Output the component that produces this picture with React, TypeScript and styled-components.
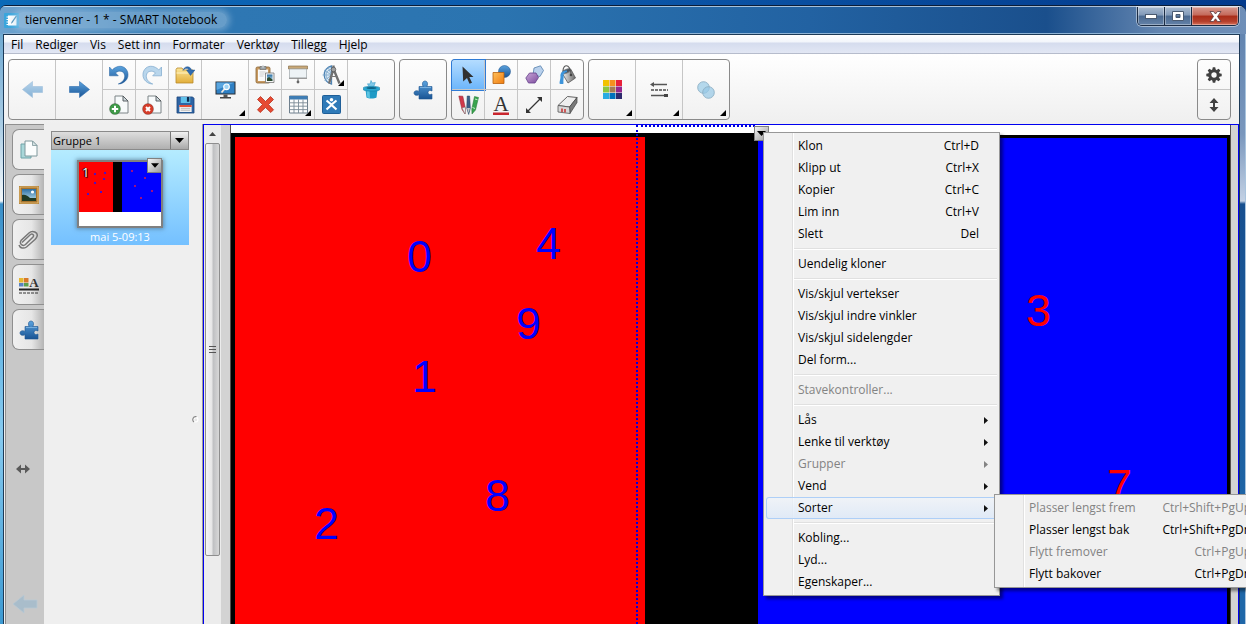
import React from "react";
import styled, { createGlobalStyle, css } from "styled-components";

const GlobalStyle = createGlobalStyle`
  *, *::before, *::after { box-sizing: border-box; }
  html, body { margin: 0; height: 100%; overflow: hidden; }
  body {
    font-family: "Open Sans", "Noto Sans", sans-serif;
    font-size: 12px;
    line-height: 16px;
    color: #000;
  }
  button, select { font: inherit; color: inherit; margin: 0; padding: 0; border: 0; background: none; }
  svg { display: block; flex: none; }
`;

/* ---------- window frame ---------- */

const Desktop = styled.div`
  height: 100vh;
  padding-top: 5px;
  overflow: hidden;
  background: linear-gradient(90deg, #0a6ab8 0%, #0d5cae 40%, #033a8c 100%);
`;

const Window = styled.div`
  height: 100%;
  display: flex;
  flex-direction: column;
  border-top: 1px solid #0b1d38;
  border-radius: 6px 7px 0 0;
  overflow: hidden;
  background: linear-gradient(90deg, #6ea3cf 0%, #2f78b4 12%, #2b74b0 40%, #2262a2 65%, #1a4f8c 84%, #6385b0 93%, #6f8fb8 100%);
`;

const TitleBar = styled.header`
  display: flex;
  align-items: flex-start;
  height: 28px;
  flex: none;
  padding: 0 7px 0 4px;
  border-top: 1px solid rgba(255, 255, 255, 0.6);
`;

const Title = styled.h1`
  display: flex;
  align-items: center;
  gap: 6px;
  flex: 1;
  height: 26px;
  margin: 0;
  font-size: 12px;
  font-weight: 400;
`;

const TitleText = styled.span`
  padding: 0 10px;
  margin-left: -10px;
  border-radius: 10px;
  background: rgba(190, 216, 236, 0.4);
  box-shadow: 0 0 6px 3px rgba(190, 216, 236, 0.4);
`;

const Controls = styled.div`
  display: flex;
  height: 19px;
  border: 1px solid #1b2c44;
  border-top: 0;
  border-radius: 0 0 5px 5px;
  overflow: hidden;
  box-shadow: 0 0 0 1px rgba(255, 255, 255, 0.45);
`;

const ControlButton = styled.button<{ $close?: boolean }>`
  display: grid;
  place-items: center;
  width: ${(p) => (p.$close ? 46 : 27)}px;
  border-right: ${(p) => (p.$close ? 0 : 1)}px solid #1b2c44;
  box-shadow: inset 0 0 0 1px rgba(255, 255, 255, 0.35);
  background: ${(p) =>
    p.$close
      ? "linear-gradient(#d79a90 0%, #c4695a 45%, #a92c18 50%, #b5402c 80%, #d8715a 100%)"
      : "linear-gradient(#a9bbd0 0%, #8199b8 45%, #4a6990 50%, #6482a8 100%)"};
`;

const Body = styled.div`
  flex: 1;
  min-height: 0;
  display: grid;
  grid-template-columns: 3px minmax(0, 1fr) 6px;
`;

const Glass = styled.div<{ $side: "left" | "right" }>`
  background: ${(p) =>
    p.$side === "left"
      ? "linear-gradient(#6fa9d2 0, #a9cce4 90px, #f2f7fa 167px, #3a8fc8 170px, #5fb2e2 280px, #86caef 400px, #3d9ad2 590px)"
      : "linear-gradient(#6385b0 0, #7a97bd 100px, #c3d1e4 167px, #174f8f 170px, #1f67a8 500px)"};
  border-right: ${(p) => (p.$side === "right" ? "1px solid #a9c4de" : "0")};
`;

const Client = styled.div`
  display: flex;
  flex-direction: column;
  min-height: 0;
  border: 1px solid #1d3a57;
  border-bottom: 0;
  box-shadow: 0 -1px 0 #8fb4d6;
  background: #efefef;
`;

/* ---------- menu bar ---------- */

const MenuBar = styled.nav`
  display: flex;
  flex: none;
  height: 19px;
  padding: 2px 0 0 1px;
  border-bottom: 1px solid #b6bccc;
  background: linear-gradient(#fff 0, #f2f5fb 7px, #d5dcee 8px, #e2e7f4 18px);
`;

const MenuBarButton = styled.button`
  padding: 0 6px;
`;

/* ---------- toolbar ---------- */

const Toolbar = styled.div`
  display: flex;
  gap: 4px;
  flex: none;
  height: 70px;
  padding: 5px 8px 4px 4px;
  background: linear-gradient(#fff, #efefef);
`;

const Group = styled.div`
  display: flex;
  border: 1px solid #8a8a8a;
  border-radius: 4px;
  background: linear-gradient(#fdfdfd, #f1f1f1);
`;

const Spacer = styled.div`
  flex: 1;
`;

const Pairs = styled.div<{ $last?: boolean }>`
  display: grid;
  grid-auto-flow: column;
  grid-template-rows: 30px 29px;
  ${(p) =>
    p.$last &&
    css`
      > :nth-last-child(-n + 2) { width: 32px; border-right: 0; }
    `}
`;

const ToolButton = styled.button<{ $wide?: boolean; $last?: boolean; $active?: boolean }>`
  position: relative;
  display: grid;
  place-items: center;
  width: ${(p) => (p.$wide ? 47 : 33)}px;
  border-right: 1px solid #c6c6c6;
  ${(p) => p.$wide && p.$last && css`width: 46px; border-right: 0;`}
  ${Pairs} > &:nth-child(odd) { border-bottom: 1px solid #c6c6c6; }
  ${(p) =>
    p.$active &&
    css`
      background: linear-gradient(#b4dcff, #6db6fb);
      box-shadow: 0 0 0 1px #2f7bd6;
      border-radius: 3px 0 0 0;
    `}
`;

const SettingsPairs = styled(Pairs)`
  > button { width: 32px; border-right: 0; }
`;

const Corner = styled.svg`
  position: absolute;
  right: 3px;
  bottom: 3px;
`;

/* ---------- side rail and page sorter ---------- */

const Main = styled.main`
  flex: 1;
  min-height: 0;
  display: flex;
`;

const Rail = styled.aside`
  display: flex;
  flex-direction: column;
  flex: none;
  width: 40px;
  padding: 4px 0 0 6px;
  border: solid #8f8f8f;
  border-width: 1px 1px 0 1px;
  margin-left: 1px;
  margin-right: -1px;
  background: #c8c8c8;
`;

const RailTabs = styled.div`
  display: flex;
  flex-direction: column;
  gap: 4px;
`;

const RailTab = styled.button<{ $active?: boolean }>`
  display: grid;
  place-items: center;
  height: 41px;
  border: 1px solid #8f8f8f;
  border-right: 0;
  border-radius: 7px 0 0 7px;
  background: ${(p) => (p.$active ? "#efefef" : "linear-gradient(90deg, #f0f0f0 0%, #e6e6e6 60%, #b4b4b4 100%)")};
  ${(p) => p.$active && css`margin-right: -1px; padding-right: 1px;`}
`;

const RailFoot = styled.div`
  flex: 1;
  display: flex;
  flex-direction: column;
  justify-content: space-between;
  align-items: flex-start;
  padding: 112px 0 10px 0;
`;

const RailButton = styled.button<{ $indent?: boolean }>`
  display: block;
  margin-left: ${(p) => (p.$indent ? 4 : 0)}px;
`;

const Sorter = styled.section`
  display: flex;
  flex: none;
  width: 159px;
  border-right: 1px solid #9a9a9a;
  background: #efefef;
`;

const SorterPages = styled.div`
  flex: none;
  width: 145px;
  padding: 7px 0 0 7px;
`;

const GroupPicker = styled.div`
  display: grid;
  grid-template-columns: minmax(0, 1fr) 18px;
  height: 19px;
  border: 1px solid #8a8a8a;
  background: linear-gradient(#dedede, #b0b0b0);
  font-size: 11px;

  > select {
    grid-area: 1 / 1 / 2 / 3;
    appearance: none;
    padding-left: 1px;
    line-height: 17px;
  }
`;

const PickerArrow = styled.span`
  grid-area: 1 / 2;
  display: grid;
  place-items: center;
  pointer-events: none;
  border: 1px solid #777;
  border-width: 0 0 0 1px;
  background: linear-gradient(#f2f2f2, #a8a8a8);
`;

const PageCard = styled.div`
  display: flex;
  flex-direction: column;
  align-items: center;
  gap: 1px;
  padding-top: 10px;
  height: 95px;
  background: linear-gradient(#b5ecff, #74c0ff);
  color: #fff;
  font-size: 11px;
`;

const Thumb = styled.div`
  position: relative;
  display: flex;
  width: 86px;
  height: 68px;
  padding-bottom: 14px;
  border: 2px solid #808080;
  background: #fff;
  box-shadow: 0 0 4px 1px rgba(70, 100, 120, 0.6);
`;

const ThumbZone = styled.div<{ $color: string; $grow: number }>`
  flex: ${(p) => p.$grow};
  background: ${(p) => p.$color};
`;

const ThumbOverlay = styled.svg`
  position: absolute;
  inset: 0;
`;

const ThumbNumber = styled.span`
  position: absolute;
  left: 3px;
  top: 1px;
  font: 400 13px/18px "Open Sans", sans-serif;
  text-shadow: 0 0 1px #000, 1px 1px 1px #000, -1px 0 1px #000;
`;

const ArrowButton = styled.button`
  display: grid;
  place-items: center;
  position: absolute;
  width: 15px;
  height: 15px;
  border: 1px solid #808080;
  background: linear-gradient(135deg, #f4f4f4, #9c9c9c);
`;

const ThumbMenu = styled(ArrowButton)`
  right: -1px;
  top: -4px;
`;

const Splitter = styled.div`
  flex: 1;
  display: grid;
  place-items: center end;
  padding: 90px 3px 0 0;
`;

/* ---------- workspace ---------- */

const Workspace = styled.section`
  flex: 1;
  min-width: 0;
  display: flex;
  border: 1px solid #0000f0;
  border-bottom: 0;
  background: #d3d3d3;
`;

const ScrollTrack = styled.div`
  display: flex;
  flex-direction: column;
  flex: none;
  width: 17px;
  padding: 0 1px;
  background: #ececec;
`;

const ScrollUp = styled.button`
  display: grid;
  place-items: center;
  height: 18px;
`;

const ScrollThumb = styled.div`
  display: grid;
  place-items: center;
  flex: 6;
  border: 1px solid #8e8e8e;
  border-radius: 2px;
  background: linear-gradient(90deg, #f6f6f6 0%, #e6e6e6 45%, #bfc0c2 55%, #d8d8d8 100%);
`;

const ScrollRest = styled.div`
  flex: 1;
`;

const Board = styled.div`
  position: relative;
  flex: 1;
  display: flex;
  padding-top: 8px;
  margin: 0 7px 0 9px;
  border: solid #55504f;
  border-width: 0 1px;
  background: #fff;
`;

const RedZone = styled.div`
  flex: none;
  width: 414px;
  border: solid #000;
  border-width: 4px 0 0 4px;
  background: #f00;
`;

const BlackZone = styled.div`
  flex: none;
  width: 113px;
  background: #000;
`;

const BlueZone = styled.div`
  flex: 1;
  margin-top: 2px;
  border: solid #000;
  border-width: 3px 3px 0 0;
  background: #00f;
`;

const Digit = styled.span<{ $x: number; $y: number; $color: string }>`
  position: absolute;
  left: ${(p) => p.$x}px;
  top: ${(p) => p.$y}px;
  font: 45px/45px "Liberation Sans", Arial, sans-serif;
  color: ${(p) => p.$color};
`;

const Selection = styled.div`
  position: absolute;
  left: 405px;
  top: 0;
  bottom: 0;
  width: 119px;
  border: dotted #0000e0;
  border-width: 2px 0 0 2px;
`;

const SelectionMenu = styled(ArrowButton)`
  left: 523px;
  top: 1px;
`;

/* ---------- context menus ---------- */

const MenuBox = styled.div`
  position: absolute;
  z-index: 2;
  padding: 2px;
  border: 1px solid #979797;
  background: linear-gradient(90deg, #f0f0f0 28px, #e0e0e0 28px, #e0e0e0 29px, #fff 29px, #fff 30px, #f0f0f0 30px);
  box-shadow: 3px 3px 3px rgba(0, 0, 0, 0.45);
`;

const ContextMenu = styled(MenuBox)`
  left: 532px;
  top: 7px;
  width: 237px;
`;

const SubMenu = styled(MenuBox)`
  left: 228px;
  top: -3px;
  width: 278px;
`;

const MenuRow = styled.div`
  position: relative;
`;

const MenuItem = styled.button<{ $open?: boolean }>`
  display: flex;
  align-items: center;
  justify-content: space-between;
  width: 100%;
  height: 22px;
  padding: 0 18px 0 32px;
  white-space: nowrap;
  text-align: left;
  &:disabled { color: #838383; }
  ${(p) =>
    p.$open &&
    css`
      border-radius: 3px;
      box-shadow: inset 0 0 0 1px #aecff7;
      background: linear-gradient(rgba(240, 244, 250, 0.7), rgba(222, 233, 247, 0.9));
    `}
`;

const MenuArrow = styled.svg`
  margin-right: -9px;
`;

const Separator = styled.hr`
  height: 2px;
  margin: 3px 0 3px 28px;
  border: 0;
  border-top: 1px solid #e0e0e0;
  background: #fff;
`;

/* ---------- icons ---------- */

const HiddenDefs = styled.svg`
  position: absolute;
`;

const Down = ({ w = 9 }: { w?: number }) => (
  <svg width={w} height="5" viewBox="0 0 9 5"><path d="M0 0h9L4.500 5z" fill="#000" /></svg>
);

const CornerMark = () => (
  <Corner width="6" height="6" viewBox="0 0 6 6"><path d="M6 0v6H0z" fill="#000" /></Corner>
);

const Defs = () => (
  <HiddenDefs width="0" height="0" aria-hidden="true">
    <defs>
      <linearGradient id="blue" x1="0" y1="0" x2="0" y2="1"><stop offset="0" stopColor="#5aa2de" /><stop offset="1" stopColor="#1a5494" /></linearGradient>
      <linearGradient id="pale" x1="0" y1="0" x2="0" y2="1"><stop offset="0" stopColor="#b4d2ea" /><stop offset="1" stopColor="#86b2d6" /></linearGradient>
      <linearGradient id="folder" x1="0" y1="0" x2="0" y2="1"><stop offset="0" stopColor="#fbe69a" /><stop offset="1" stopColor="#e2ae3a" /></linearGradient>
      <linearGradient id="orange" x1="0" y1="0" x2="1" y2="1"><stop offset="0" stopColor="#ffc05a" /><stop offset="1" stopColor="#f07c10" /></linearGradient>
      <linearGradient id="violet" x1="0" y1="0" x2="1" y2="1"><stop offset="0" stopColor="#c9a6d8" /><stop offset="1" stopColor="#7d4d9e" /></linearGradient>
      <linearGradient id="metal" x1="0" y1="0" x2="1" y2="0"><stop offset="0" stopColor="#f4f4f4" /><stop offset="1" stopColor="#6a6a6a" /></linearGradient>
      <linearGradient id="sky" x1="0" y1="0" x2="0" y2="1"><stop offset="0" stopColor="#2b6ea2" /><stop offset="1" stopColor="#bfe3f0" /></linearGradient>
    </defs>
  </HiddenDefs>
);

const AppIcon = () => (
  <svg width="15" height="15" viewBox="0 0 15 15">
    <rect width="15" height="15" rx="1" fill="#3aa5dc" />
    <path d="M4 2.500h8.500v10H4z" fill="#fff" />
    <path d="M2.500 4h3M2.500 6.500h3M2.500 9h3M2.500 11.500h3" stroke="#fff" strokeWidth="1.200" />
    <path d="M12 2.500 7.500 9 7 10.800l1.500-1L13 3.300z" fill="#3d86b0" />
  </svg>
);

const Arrow = ({ pale, left }: { pale?: boolean; left?: boolean }) => (
  <svg width="21" height="17" viewBox="0 0 21 17">
    <path
      d={left ? "M.5 8.500 10.500.5v5h10v6h-10v5z" : "M20.500 8.500 10.500.5v5H.5v6h10v5z"}
      fill={pale ? "url(#pale)" : "url(#blue)"}
      stroke={pale ? "#9fc0dc" : "#2c6cae"}
      strokeWidth=".6"
    />
  </svg>
);

const turn =
  "M.5 2 3.200 5C7 .8 12.500 .2 16 3c4 3.500 4 10 .2 13.200C14 18.300 11.500 19 9.300 19c4.200-1.800 6.900-4.700 6.300-8.800C15 6 10 4.800 6.500 7.900L9.300 10.800H.5z";
const Undo = () => (
  <svg width="20" height="20" viewBox="0 0 20 20"><path d={turn} fill="url(#blue)" stroke="#1f5c9c" strokeWidth=".5" /></svg>
);
const Redo = () => (
  <svg width="20" height="20" viewBox="0 0 20 20"><path d={turn} transform="translate(20 0) scale(-1 1)" fill="#b9d6ec" stroke="#86aed0" strokeWidth=".8" /></svg>
);

const Folder = () => (
  <svg width="20" height="20" viewBox="0 0 20 20">
    <path d="M1 4.500 2 3h5l1.500 2H18v13H1z" fill="url(#folder)" stroke="#b98a2c" strokeWidth=".8" />
    <path d="M1.500 8h16" stroke="#fff3c4" />
    <path d="M8 5.500C9 1 15 0 16.500 5H20l-4.500 5.500L11.500 5h2.300C13 3 10 3 8 5.500z" fill="#2f6cb0" stroke="#1c4c86" strokeWidth=".4" />
  </svg>
);

const PageMark = ({ color, children }: { color: string; children: React.ReactNode }) => (
  <svg width="20" height="20" viewBox="0 0 20 20">
    <path d="M6 1h8l5 5v12H6z" fill="#f7fafb" stroke="#7d8487" />
    <path d="M14 1v5h5z" fill="#cfd9dd" stroke="#4d5457" strokeWidth=".9" />
    <circle cx="6" cy="14" r="5.500" fill={color} stroke="rgba(0,0,0,.35)" strokeWidth=".6" />
    {children}
  </svg>
);
const AddPage = () => <PageMark color="#3f9a48"><path d="M6 10.800v6.400M2.800 14h6.400" stroke="#fff" strokeWidth="2" /></PageMark>;
const DeletePage = () => <PageMark color="#d63d2a"><path d="m4 12 4 4m0-4-4 4" stroke="#fff" strokeWidth="2" /></PageMark>;

const Save = () => (
  <svg width="19" height="18" viewBox="0 0 20 19">
    <path d="M1 1h16.500L19 2.500V18H1z" fill="#2d64a4" stroke="#1c4478" strokeWidth=".8" />
    <path d="M5 1h10v6.500H5z" fill="#5fc0ea" /><path d="M11.500 1H14v5h-2.500z" fill="#0d2c50" />
    <path d="M3.500 9.500h13V17h-13z" fill="#f3f3f3" /><path d="M3.500 9.500h13v2h-13z" fill="#e05038" />
    <path d="M5 13h10M5 15h10" stroke="#a8a8a8" strokeWidth=".8" />
  </svg>
);

const Monitor = () => (
  <svg width="21" height="18" viewBox="0 0 21 18">
    <path d="M.5.500h20v13H.5z" fill="#2a2f35" /><path d="M1.500 1.500h18v11h-18z" fill="#2f80c4" />
    <path d="M1.500 1.500h18L1.500 9z" fill="#5aa6e0" />
    <path d="M8.500 13.500h4v2.500h-4z" fill="#555" /><path d="M5 16h11v1.500H5z" fill="#444" />
    <path d="m9.500 8-3 3.500" stroke="#f1e8e0" strokeWidth="1.800" /><circle cx="11.500" cy="5.800" r="2.800" fill="#9fd4f5" stroke="#fff" strokeWidth="1.200" />
  </svg>
);

const Paste = () => (
  <svg width="20" height="19" viewBox="0 0 20 19">
    <rect x="1" y="2" width="14" height="16" rx="1.500" fill="#c79a62" stroke="#8b6434" strokeWidth=".8" />
    <path d="M3 4.500h10V16H3z" fill="#fafafa" /><path d="M5 1.500h6V4.500H5z" fill="#9ba3a8" stroke="#666" strokeWidth=".6" /><circle cx="8" cy="1.700" r="1.300" fill="#b7bec2" />
    <path d="M4.500 7h6M4.500 9h5M4.500 11h4" stroke="#d0d0d0" />
    <path d="M10.500 8h8.500v9.500h-8.500z" fill="#f6f6f6" stroke="#777" strokeWidth=".8" /><path d="M12 9.500h5.500V16H12z" fill="url(#sky)" /><path d="m12 16 0-2.500 2-1.500 3.500 2.500V16z" fill="#2d4a30" />
  </svg>
);

const Screen = () => (
  <svg width="20" height="19" viewBox="0 0 20 19">
    <path d="M.5 1h19v3H.5z" fill="#c8a878" stroke="#8b7350" strokeWidth=".7" />
    <path d="M1.500 4h17v9h-17z" fill="#eef3f6" stroke="#aab0b4" strokeWidth=".8" /><path d="M1 13.300h18" stroke="#8a8a8a" />
    <path d="M10 13.500V17" stroke="#777" /><circle cx="10" cy="17" r="1.400" fill="#666" />
  </svg>
);

const Compass = () => (
  <svg width="21" height="20" viewBox="0 0 21 20">
    <path d="M10.500 1A9.200 9.200 0 0 0 10.500 19z" fill="#dceaf5" stroke="#4f84b4" strokeWidth="1.300" />
    <path d="M10.500 4.500a5.500 5.500 0 0 0 0 11M10.500 10 3 5M10.500 10H1.500M10.500 10 3.500 15.500M10.500 10 7 2" fill="none" stroke="#7aa4c8" strokeWidth=".8" />
    <path d="M12.500.500v3M8 18.500 12.500 4 18.500 18.500" fill="none" stroke="#707070" strokeWidth="2.400" />
    <circle cx="12.500" cy="4.500" r="2.300" fill="#a0a0a0" stroke="#555" strokeWidth=".7" /><path d="M10 11.500h5.500" stroke="#777" />
  </svg>
);

const Delete = () => (
  <svg width="19" height="19" viewBox="0 0 19 19">
    <path d="M1.500 4.500 4.500 1.500 9.500 6.500 14.500 1.500 17.500 4.500 12.500 9.500 17.500 14.800 14.800 17.500 9.500 12.500 4.200 17.500 1.500 14.800 6.500 9.500z" fill="#e64b33" stroke="#b9301c" strokeWidth=".8" />
  </svg>
);

const TableIcon = () => (
  <svg width="19" height="19" viewBox="0 0 19 19">
    <path d="M.5 1h18v17H.5z" fill="#fdfdfd" stroke="#6f7f8c" /><path d="M.5 1h18v3.500H.5z" fill="#3f7db4" />
    <path d="M.5 7.800h18M.5 11.200h18M.5 14.600h18M5 4.500V18M9.500 4.500V18M14 4.500V18" stroke="#7c8b96" strokeWidth=".9" />
  </svg>
);

const Exchange = () => (
  <svg width="19" height="19" viewBox="0 0 19 19">
    <rect x=".5" y=".5" width="18" height="18" rx="1" fill="#2f7ab8" stroke="#1f5f98" />
    <path d="M4.500 5.500 9.500 9.500l5-4M4.500 14.500l5-4.500 5 4.500" fill="none" stroke="#fff" strokeWidth="2.200" />
    <circle cx="9.500" cy="4.800" r="1.800" fill="#fff" />
  </svg>
);

const MagicHat = () => (
  <svg width="17" height="19" viewBox="0 0 17 19">
    <path d="M8 .5 9.300 3l3-.5-1.500 4h-5L4.500 3.800 7 4z" fill="#7ec8e8" stroke="#3a9cc8" strokeWidth=".6" />
    <path d="M2.500 9.500h12l-1 8c-2 1.300-8 1.300-10 0z" fill="#1e9ac6" /><path d="M3.500 10.500h3l.5 7.500-2.700-.5z" fill="#5cc4e2" />
    <path d="M.5 7.500C2 6 15 6 16.500 7.500V10c-2 1.500-14 1.500-16 0z" fill="#2aa6d0" stroke="#1480a8" strokeWidth=".6" /><ellipse cx="8.500" cy="8" rx="5" ry="1.100" fill="#0d6488" />
  </svg>
);

const Puzzle = () => (
  <svg width="20" height="20" viewBox="0 0 20 20">
    <path
      d="M6 6.500h4.200C9 5 9 1 12 1s3 4 1.800 5.500H19V11c-1.500-1-4-.7-4 1.500s2.500 2.500 4 1.500v5H6v-4.500C4.500 16 1 15.500 1 13s3.500-3 5-1.500z"
      fill="url(#blue)" stroke="#1f5590" strokeWidth=".6"
    />
    <path d="M7 7.500h11" stroke="#8cc0ea" strokeWidth=".7" />
  </svg>
);

const Pointer = () => (
  <svg width="12" height="18" viewBox="0 0 12 18"><path d="M.5.500 11.500 11H7.300l2.700 5.700-2.500 1L5 12l-3.800 3.500z" fill="#303030" /></svg>
);

const Shapes = () => (
  <svg width="19" height="19" viewBox="0 0 19 19">
    <circle cx="12.500" cy="6.500" r="6" fill="url(#blue)" stroke="#2a6098" strokeWidth=".6" />
    <path d="M1 7.500h11v11H1z" fill="url(#orange)" stroke="#b8600c" strokeWidth=".8" />
  </svg>
);

const Polygons = () => (
  <svg width="19" height="19" viewBox="0 0 19 19">
    <path d="M9 3 15.500 .8 18.500 5.500 15 11.500 8 10z" fill="#b8d0ec" stroke="#5580ac" strokeWidth=".8" />
    <path d="M4.500 8h6.500l2.500 4.500-3.500 5.500H3.500L.8 13z" fill="url(#violet)" stroke="#64408a" strokeWidth=".8" />
  </svg>
);

const Bucket = () => (
  <svg width="17" height="20" viewBox="0 0 17 20">
    <path d="M3 8 12 4.500l4.500 8.500-7.500 5z" fill="url(#metal)" stroke="#555" strokeWidth=".8" />
    <ellipse cx="7.500" cy="6.200" rx="4.800" ry="2" transform="rotate(-22 7.500 6.200)" fill="#4a5560" stroke="#888" strokeWidth=".7" />
    <path d="M4 6C4 2 6 .8 7.500.8S12 3 12 9.500" fill="none" stroke="#555" strokeWidth="1.100" /><circle cx="12" cy="10" r="1.300" fill="#444" />
    <path d="M8 5.500C3 5.500 1 8 1.500 12c0 2-1 4-1 6.500 1.500 1 3.500.5 4 0C4 15 5 12.500 4.500 10 4.500 8.500 6 7.500 8 7z" fill="#3d94da" />
  </svg>
);

const Pens = () => (
  <svg width="21" height="20" viewBox="0 0 21 20">
    <path d="m.8 1 4 .2L7.500 14l-.5 5-3-4.500z" fill="#d0394a" stroke="#8c1f2c" strokeWidth=".5" /><path d="m4 13 3.300-1 .2 3-.5 4z" fill="#eee" stroke="#777" strokeWidth=".5" />
    <path d="M9.200 1h2.400l.8 12-1.700 6.500-2-6.500z" fill="#3a5f88" stroke="#22405f" strokeWidth=".5" /><path d="M9 13h3l-1.400 5z" fill="#c8c8c8" />
    <path d="m16.500 1.500 4 1L17.500 15 14 19l-.2-5z" fill="#3aa44e" stroke="#1f7030" strokeWidth=".5" /><path d="m17 4 2.500.7M14.500 12.500l2.500 1" stroke="#c4ecc8" />
  </svg>
);

const TextFormat = () => (
  <svg width="22" height="22" viewBox="0 0 22 22">
    <text x="11" y="17" textAnchor="middle" fontFamily="Liberation Serif, serif" fontSize="21" fill="#333">A</text>
    <path d="M3 18.500h16V21H3z" fill="#c9252d" />
  </svg>
);

const Line = () => (
  <svg width="18" height="18" viewBox="0 0 18 18">
    <path d="M2.500 15.500 15.500 2.500" stroke="#333" strokeWidth="1.300" /><path d="M17 1v5l-5-5zM1 17v-5l5 5z" fill="#333" />
  </svg>
);

const Eraser = () => (
  <svg width="21" height="20" viewBox="0 0 21 20">
    <path d="M10.500 1.500 20 2.500 12.500 12 1 10.500z" fill="#efefef" stroke="#555" strokeWidth=".9" />
    <path d="M20 2.500v5L13 18.500 12.500 12z" fill="#7a7a7a" stroke="#444" strokeWidth=".7" />
    <path d="M1 10.500 12.500 12l.5 6.500-12-1.500z" fill="#d8d8d8" stroke="#555" strokeWidth=".8" /><path d="M5 13.500v3.500" stroke="#c62f2f" strokeWidth="1.500" /><path d="M8 14v3.500" stroke="#c62f2f" strokeWidth="1.500" />
  </svg>
);

const swatches = ["#f2c200", "#f5901e", "#e8203a", "#8cc63f", "#a67c52", "#93278f", "#29abe2", "#0071bc", "#2e2a6e"];
const Swatches = () => (
  <svg width="19" height="19" viewBox="0 0 19 19">
    {swatches.map((c, i) => <rect key={c} x={(i % 3) * 6.500} y={Math.floor(i / 3) * 6.500} width="6" height="6" fill={c} />)}
  </svg>
);

const LineStyles = () => (
  <svg width="18" height="16" viewBox="0 0 18 16">
    <path d="M2 2.500h15M1 13.500h16" stroke="#555" strokeWidth="1.500" /><path d="M1 8h17" stroke="#777" strokeWidth="2" strokeDasharray="3 1" />
    <path d="M4 0v5L0 2.500z" fill="#555" /><path d="M14 12h4v3h-4z" fill="#444" />
  </svg>
);

const Opacity = () => (
  <svg width="18" height="18" viewBox="0 0 18 18">
    <circle cx="6.500" cy="6.500" r="5.800" fill="#b4d8ec" stroke="#8db0c4" strokeWidth=".9" /><circle cx="11.500" cy="11.500" r="5.800" fill="rgba(150,200,230,.7)" stroke="#8db0c4" strokeWidth=".9" />
  </svg>
);

const Gear = () => (
  <svg width="16" height="16" viewBox="0 0 16 16">
    <circle cx="8" cy="8" r="4.200" fill="none" stroke="#404040" strokeWidth="3" />
    {[0, 45, 90, 135, 180, 225, 270, 315].map((a) => (
      <path key={a} d="M6.200 3 6.800.3h2.400L9.800 3z" transform={`rotate(${a} 8 8)`} fill="#404040" />
    ))}
  </svg>
);

const DoubleArrow = ({ horizontal }: { horizontal?: boolean }) => (
  <svg width="14" height="14" viewBox="0 0 14 14">
    <path d="M7 0 11.500 5H8v4h3.500L7 14 2.500 9H6V5H2.500z" transform={horizontal ? "rotate(90 7 7)" : undefined} fill={horizontal ? "#5a5a5a" : "#404040"} />
  </svg>
);

const Pages = () => (
  <svg width="18" height="19" viewBox="0 0 18 19">
    <path d="M1 4h10v14H1z" fill="#a9d7d9" stroke="#6fa3a8" /><path d="M5 1h7.500L17 5.500V16H5z" fill="#fbfdfd" stroke="#7f989c" /><path d="M12.500 1v4.500H17z" fill="#d4e2e4" stroke="#7f989c" strokeWidth=".8" />
  </svg>
);

const Picture = () => (
  <svg width="20" height="18" viewBox="0 0 20 18">
    <path d="M0 0h20v18H0z" fill="#a5732f" /><path d="M1 1h18v16H1z" fill="none" stroke="#e2b86c" strokeWidth="1.200" />
    <path d="M3 3h14v12H3z" fill="url(#sky)" /><path d="M3 9c3-1 6 1 8 3h6v3H3z" fill="#1f3a24" /><circle cx="13.500" cy="6" r="1.600" fill="#fff" />
  </svg>
);

const Clip = () => (
  <svg width="21" height="19" viewBox="0 0 21 19">
    <path d="M4 12.500 12.500 4.500c1.800-1.500 4 .5 2.500 2.500L7.500 14.500c-2.500 2.300-6.500-.5-4.500-4L11 3c3.500-3.300 9.500-.5 8 3.500-.4 1-1 2-2 3L8.500 17c-3 2-6.500 1.200-7.500-2" fill="none" stroke="#777" strokeWidth="1.500" />
  </svg>
);

const Properties = () => (
  <svg width="20" height="18" viewBox="0 0 20 18">
    <path d="M0 2h4.500v4.500H0z" fill="#e6b830" /><path d="M5 2h4.500v4.500H5z" fill="#d87828" /><path d="M0 7h4.500v3.500H0z" fill="#5a82c0" /><path d="M5 7h4.500v3.500H5z" fill="#5aa04c" />
    <text x="15" y="11" textAnchor="middle" fontFamily="Liberation Serif, serif" fontWeight="700" fontSize="13" fill="#333">A</text>
    <path d="M0 13.500h20" stroke="#222" strokeWidth="2" /><path d="M0 17h20" stroke="#333" strokeDasharray="3 1" />
  </svg>
);

/* ---------- content ---------- */

const menus = ["Fil", "Rediger", "Vis", "Sett inn", "Formater", "Verktøy", "Tillegg", "Hjelp"];

const digits = [
  { n: 0, x: 176, y: 109, c: "#00f" },
  { n: 4, x: 305, y: 96, c: "#00f" },
  { n: 9, x: 285, y: 176, c: "#00f" },
  { n: 1, x: 181, y: 229, c: "#00f" },
  { n: 8, x: 254, y: 348, c: "#00f" },
  { n: 2, x: 83, y: 376, c: "#00f" },
  { n: 3, x: 795, y: 163, c: "#f00" },
  { n: 7, x: 876, y: 338, c: "#f00" },
];

type Entry = { label: string; keys?: string; off?: boolean; more?: boolean; sub?: Entry[] };

const contextSections: Entry[][] = [
  [
    { label: "Klon", keys: "Ctrl+D" },
    { label: "Klipp ut", keys: "Ctrl+X" },
    { label: "Kopier", keys: "Ctrl+C" },
    { label: "Lim inn", keys: "Ctrl+V" },
    { label: "Slett", keys: "Del" },
  ],
  [{ label: "Uendelig kloner" }],
  [
    { label: "Vis/skjul vertekser" },
    { label: "Vis/skjul indre vinkler" },
    { label: "Vis/skjul sidelengder" },
    { label: "Del form..." },
  ],
  [{ label: "Stavekontroller...", off: true }],
  [
    { label: "Lås", more: true },
    { label: "Lenke til verktøy", more: true },
    { label: "Grupper", more: true, off: true },
    { label: "Vend", more: true },
    {
      label: "Sorter",
      more: true,
      sub: [
        { label: "Plasser lengst frem", keys: "Ctrl+Shift+PgUp", off: true },
        { label: "Plasser lengst bak", keys: "Ctrl+Shift+PgDn" },
        { label: "Flytt fremover", keys: "Ctrl+PgUp", off: true },
        { label: "Flytt bakover", keys: "Ctrl+PgDn" },
      ],
    },
  ],
  [{ label: "Kobling..." }, { label: "Lyd..." }, { label: "Egenskaper..." }],
];

const Item = ({ entry }: { entry: Entry }) => (
  <MenuRow>
    <MenuItem role="menuitem" disabled={entry.off} $open={!!entry.sub}>
      <span>{entry.label}</span>
      {entry.keys && <span>{entry.keys}</span>}
      {entry.more && (
        <MenuArrow width="4" height="7" viewBox="0 0 4 7">
          <path d="M0 0v7l4-3.500z" fill={entry.off ? "#838383" : "#111"} />
        </MenuArrow>
      )}
    </MenuItem>
    {entry.sub && (
      <SubMenu role="menu" aria-label={entry.label}>
        {entry.sub.map((e) => <Item key={e.label} entry={e} />)}
      </SubMenu>
    )}
  </MenuRow>
);

type ToolProps = { label: string; icon: React.ReactNode; more?: boolean; wide?: boolean; last?: boolean; active?: boolean };
const Tool = ({ label, icon, more, wide, last, active }: ToolProps) => (
  <ToolButton aria-label={label} aria-pressed={active} $wide={wide} $last={last} $active={active}>
    {icon}
    {more && <CornerMark />}
  </ToolButton>
);

export default function App() {
  return (
    <Desktop>
      <GlobalStyle />
      <Defs />
      <Window>
        <TitleBar>
          <Title>
            <AppIcon />
            <TitleText>tiervenner - 1 * - SMART Notebook</TitleText>
          </Title>
          <Controls>
            <ControlButton aria-label="Minimer">
              <svg width="12" height="5" viewBox="0 0 12 5"><rect x=".5" y=".5" width="11" height="4" fill="#fff" stroke="#4a5a70" /></svg>
            </ControlButton>
            <ControlButton aria-label="Maksimer">
              <svg width="12" height="10" viewBox="0 0 12 10"><path d="M.5.500h11v9H.5zM4 3.500v3h4v-3z" fill="#fff" stroke="#4a5a70" fillRule="evenodd" /></svg>
            </ControlButton>
            <ControlButton aria-label="Lukk" $close>
              <svg width="13" height="11" viewBox="0 0 13 11"><path d="M1 .500h3.500l2 2.500 2-2.500H12L8.500 5.500l3.500 5H8.500l-2-2.700-2 2.700H1l3.500-5z" fill="#fff" stroke="#5a3a40" strokeWidth=".8" /></svg>
            </ControlButton>
          </Controls>
        </TitleBar>
        <Body>
          <Glass $side="left" />
          <Client>
            <MenuBar>
              {menus.map((m) => <MenuBarButton key={m}>{m}</MenuBarButton>)}
            </MenuBar>
            <Toolbar>
              <Group>
                <Tool wide label="Forrige side" icon={<Arrow pale left />} />
                <Tool wide label="Neste side" icon={<Arrow />} />
                <Pairs>
                  <Tool label="Angre" icon={<Undo />} />
                  <Tool label="Legg til side" icon={<AddPage />} />
                  <Tool label="Gjør om" icon={<Redo />} />
                  <Tool label="Slett side" icon={<DeletePage />} />
                  <Tool label="Åpne" icon={<Folder />} />
                  <Tool label="Lagre" icon={<Save />} />
                </Pairs>
                <Tool wide more label="Vis skjermer" icon={<Monitor />} />
                <Pairs>
                  <Tool label="Lim inn" icon={<Paste />} />
                  <Tool label="Slett" icon={<Delete />} />
                  <Tool label="Skjermskygge" icon={<Screen />} />
                  <Tool more label="Tabell" icon={<TableIcon />} />
                  <Tool more label="Måleverktøy" icon={<Compass />} />
                  <Tool label="SMART Exchange" icon={<Exchange />} />
                </Pairs>
                <Tool wide last label="Aktivitetsbygger" icon={<MagicHat />} />
              </Group>
              <Group>
                <Tool wide last label="Tillegg" icon={<Puzzle />} />
              </Group>
              <Group>
                <Pairs $last>
                  <Tool active label="Velg" icon={<Pointer />} />
                  <Tool label="Penner" icon={<Pens />} />
                  <Tool label="Former" icon={<Shapes />} />
                  <Tool label="Tekst" icon={<TextFormat />} />
                  <Tool label="Mangekanter" icon={<Polygons />} />
                  <Tool label="Linjer" icon={<Line />} />
                  <Tool label="Fyll" icon={<Bucket />} />
                  <Tool label="Viskelær" icon={<Eraser />} />
                </Pairs>
              </Group>
              <Group>
                <Tool wide more label="Farge" icon={<Swatches />} />
                <Tool wide more label="Linjestil" icon={<LineStyles />} />
                <Tool wide last more label="Gjennomsiktighet" icon={<Opacity />} />
              </Group>
              <Spacer />
              <Group>
                <SettingsPairs>
                  <Tool label="Innstillinger" icon={<Gear />} />
                  <Tool label="Flytt verktøylinje" icon={<DoubleArrow />} />
                </SettingsPairs>
              </Group>
            </Toolbar>
            <Main>
              <Rail>
                <RailTabs>
                  <RailTab $active aria-label="Sidesortering"><Pages /></RailTab>
                  <RailTab aria-label="Galleri"><Picture /></RailTab>
                  <RailTab aria-label="Vedlegg"><Clip /></RailTab>
                  <RailTab aria-label="Egenskaper"><Properties /></RailTab>
                  <RailTab aria-label="Tillegg"><Puzzle /></RailTab>
                </RailTabs>
                <RailFoot>
                  <RailButton $indent aria-label="Flytt sidepanel"><DoubleArrow horizontal /></RailButton>
                  <RailButton aria-label="Skjul sidepanel">
                    <svg width="26" height="20" viewBox="0 0 26 20"><path d="M1 10 12 1v5h13v8H12v5z" fill="#a9bdcb" stroke="#b9c9d4" strokeWidth=".8" /></svg>
                  </RailButton>
                </RailFoot>
              </Rail>
              <Sorter>
                <SorterPages>
                  <GroupPicker>
                    <select aria-label="Gruppe" defaultValue="g1">
                      <option value="g1">Gruppe 1</option>
                    </select>
                    <PickerArrow><Down /></PickerArrow>
                  </GroupPicker>
                  <PageCard>
                    <Thumb>
                      <ThumbZone $color="#f00" $grow={34} />
                      <ThumbZone $color="#000" $grow={9} />
                      <ThumbZone $color="#00f" $grow={39} />
                      <ThumbOverlay width="82" height="64" viewBox="0 0 82 64">
                        {[[15, 11], [25, 10], [24, 16], [15, 20], [21, 29], [8, 31]].map(([x, y]) => (
                          <rect key={`${x}-${y}`} x={x} y={y} width="2" height="2" fill="#5010c0" />
                        ))}
                        {[[52, 8], [65, 15], [55, 23], [72, 28], [61, 35]].map(([x, y]) => (
                          <rect key={`${x}-${y}`} x={x} y={y} width="2" height="2" fill="#a01080" />
                        ))}
                      </ThumbOverlay>
                      <ThumbNumber>1</ThumbNumber>
                      <ThumbMenu aria-label="Sidemeny"><Down w={8} /></ThumbMenu>
                    </Thumb>
                    <span>mai 5-09:13</span>
                  </PageCard>
                </SorterPages>
                <Splitter>
                  <svg width="7" height="7" viewBox="0 0 7 7">
                    <circle cx="3.500" cy="3.500" r="3" fill="#fff" /><path d="M4.500 .700A3 3 0 0 0 2 6" fill="none" stroke="#888" strokeWidth="1.200" /><circle cx="3.800" cy="3.800" r="1.500" fill="#e8e8e8" />
                  </svg>
                </Splitter>
              </Sorter>
              <Workspace>
                <ScrollTrack>
                  <ScrollUp aria-label="Rull opp">
                    <svg width="7" height="4" viewBox="0 0 7 4"><path d="M0 4h7L3.500 0z" fill="#444" /></svg>
                  </ScrollUp>
                  <ScrollThumb>
                    <svg width="7" height="9" viewBox="0 0 7 9"><path d="M0 1.500h7M0 4.500h7M0 7.500h7" stroke="#555" /></svg>
                  </ScrollThumb>
                  <ScrollRest />
                </ScrollTrack>
                <Board>
                  <RedZone />
                  <BlackZone />
                  <BlueZone />
                  {digits.map((d) => (
                    <Digit key={d.n} $x={d.x} $y={d.y} $color={d.c}>{d.n}</Digit>
                  ))}
                  <Selection />
                  <SelectionMenu aria-label="Objektmeny"><Down /></SelectionMenu>
                  <ContextMenu role="menu" aria-label="Objekt">
                    {contextSections.map((section, i) => (
                      <React.Fragment key={section[0].label}>
                        {i > 0 && <Separator />}
                        {section.map((e) => <Item key={e.label} entry={e} />)}
                      </React.Fragment>
                    ))}
                  </ContextMenu>
                </Board>
              </Workspace>
            </Main>
          </Client>
          <Glass $side="right" />
        </Body>
      </Window>
    </Desktop>
  );
}
